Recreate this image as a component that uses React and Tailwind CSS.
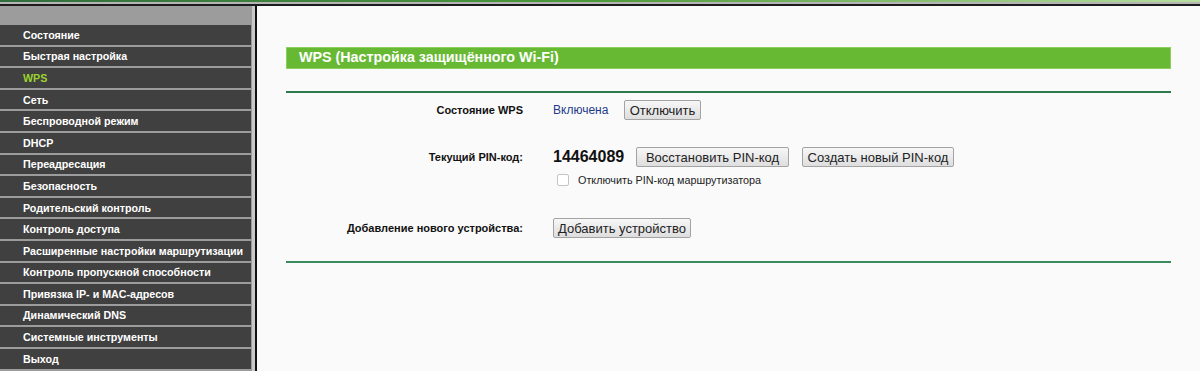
import React from 'react';

const menu = [
  'Состояние',
  'Быстрая настройка',
  'WPS',
  'Сеть',
  'Беспроводной режим',
  'DHCP',
  'Переадресация',
  'Безопасность',
  'Родительский контроль',
  'Контроль доступа',
  'Расширенные настройки маршрутизации',
  'Контроль пропускной способности',
  'Привязка IP- и MAC-адресов',
  'Динамический DNS',
  'Системные инструменты',
  'Выход',
];

const btn =
  'h-[20px] border border-[#a3a3a3] rounded-[2px] bg-gradient-to-b from-[#f7f7f7] to-[#dedede] text-[13px] text-[#222] leading-none flex items-center justify-center';

function Label({ children }) {
  return (
    <div className="w-[237px] shrink-0 text-right text-[11px] font-bold text-[#111]">
      {children}
    </div>
  );
}

export default function App() {
  return (
    <div className="w-[1200px] h-[371px] overflow-hidden flex flex-col bg-[#fafafa] font-['Liberation_Sans',Arial,sans-serif]">
      {/* верхняя полоса */}
      <div className="h-[2px] bg-gradient-to-r from-[#2f6e3c] via-[#4e9a3a] to-[#b8e0a0]" />
      <div className="h-[2px] bg-[#b5b5b5]" />
      <div className="h-[2px] bg-[#1c1c1c]" />

      <div className="flex flex-1 min-h-0">
        {/* меню */}
        <div className="w-[252px] shrink-0 bg-[#9c9c9c] pt-[19px] flex flex-col">
          {menu.map((item) => (
            <div
              key={item}
              className="h-[19.6px] mb-[2px] w-[251px] bg-[#404040] flex items-center pl-[23px] text-[10.7px] font-bold whitespace-nowrap"
            >
              <span className={item === 'WPS' ? 'text-[#9bd22e]' : 'text-white'}>{item}</span>
            </div>
          ))}
        </div>
        <div className="w-[3px] shrink-0 bg-[#c9c9c9]" />
        <div className="w-[2px] shrink-0 bg-[#111]" />

        {/* содержимое */}
        <div className="flex-1 pl-[29px] pt-[41px]">
          <div className="w-[885px]">
            <div className="h-[22px] bg-[#67b934] border border-[#8ccf5e] flex items-center pl-[12px] text-[14.3px] font-bold text-white">
              WPS (Настройка защищённого Wi-Fi)
            </div>

            <div className="mt-[22px] h-[2px] bg-[#2c7a4e]" />

            <div className="mt-[7px] flex items-center h-[20px]">
              <Label>Состояние WPS</Label>
              <div className="ml-[30px] flex items-center gap-[13px]">
                <span className="text-[12px] text-[#1d3a8a] w-[58px]">Включена</span>
                <button className={`${btn} w-[77px]`}>Отключить</button>
              </div>
            </div>

            <div className="mt-[27px] flex items-center h-[20px]">
              <Label>Текущий PIN-код:</Label>
              <div className="ml-[30px] flex items-center">
                <span className="text-[16px] font-bold text-[#111] w-[83px]">14464089</span>
                <button className={`${btn} w-[153px]`}>Восстановить PIN-код</button>
                <button className={`${btn} w-[152px] ml-[13px]`}>Создать новый PIN-код</button>
              </div>
            </div>

            <div className="mt-[7px] flex items-center h-[12px]">
              <div className="w-[237px] shrink-0" />
              <div className="ml-[34px] flex items-center">
                <span className="w-[12px] h-[12px] border border-[#c4c4c4] rounded-[2px] bg-white" />
                <span className="ml-[9px] text-[10.8px] text-[#222]">Отключить PIN-код маршрутизатора</span>
              </div>
            </div>

            <div className="mt-[32px] flex items-center h-[20px]">
              <Label>Добавление нового устройства:</Label>
              <div className="ml-[30px] flex items-center">
                <button className={`${btn} w-[138px]`}>Добавить устройство</button>
              </div>
            </div>

            <div className="mt-[23px] h-[2px] bg-[#3a8a5c]" />
          </div>
        </div>
      </div>
    </div>
  );
}
